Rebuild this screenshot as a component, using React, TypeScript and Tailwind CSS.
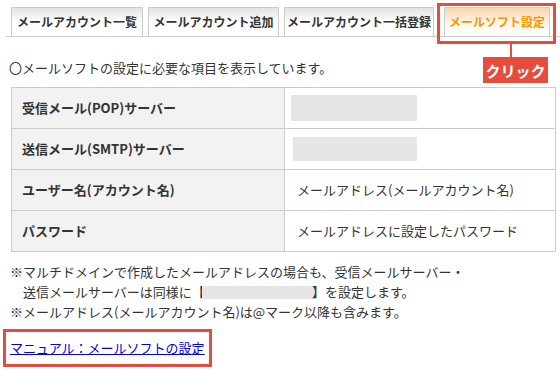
import React from "react";

const font = { fontFamily: '"Noto Sans CJK JP", "Noto Sans", sans-serif' };

function Tab({ label, w }: { label: string; w: string }) {
  return (
    <div
      className={`${w} h-[29px] flex items-center justify-center border border-b-0 border-[#cccccc] bg-gradient-to-b from-[#e2e2e2] via-white to-white text-[12px] font-bold text-[#333333] whitespace-nowrap`}
    >
      {label}
    </div>
  );
}

const rows: { h: string; v: React.ReactNode }[] = [
  { h: "受信メール(POP)サーバー", v: <div className="ml-[6px] w-[126px] h-[26px] bg-[#e6e6e6]" /> },
  { h: "送信メール(SMTP)サーバー", v: <div className="ml-[8px] w-[124px] h-[24px] bg-[#e6e6e6]" /> },
  { h: "ユーザー名(アカウント名)", v: <span className="pl-[12px]">メールアドレス(メールアカウント名)</span> },
  { h: "パスワード", v: <span className="pl-[12px]">メールアドレスに設定したパスワード</span> },
];

export default function App() {
  return (
    <div className="relative w-[560px] h-[370px] bg-white text-[#333333] overflow-hidden" style={font}>
      {/* Tabs */}
      <div className="ml-[6px] pt-[7px] pl-[5px] flex border-b border-[#cccccc]">
        <Tab label="メールアカウント一覧" w="w-[132px]" />
        <div className="w-[5px]" />
        <Tab label="メールアカウント追加" w="w-[131px]" />
        <div className="w-[5px]" />
        <Tab label="メールアカウント一括登録" w="w-[150px]" />
        <div className="w-[10px]" />
        <div className="w-[106px] h-[29px] flex items-center justify-center border border-b-0 border-[#cccccc] bg-gradient-to-b from-[#fcd6aa] via-[#fff3e6] to-white text-[12px] font-bold text-[#f39800] whitespace-nowrap">
          メールソフト設定
        </div>
      </div>

      {/* Red highlight box around active tab */}
      <div className="absolute left-[437px] top-[3px] w-[119px] h-[41px] border-[3px] border-[#e64b3b]" />
      {/* Callout line + label */}
      <div className="absolute left-[510px] top-[44px] w-[2px] h-[13px] bg-[#e64b3b]" />
      <div className="absolute left-[483px] top-[57px] w-[65px] h-[26px] bg-[#e64b3b] flex items-center justify-center text-white text-[15px] font-bold leading-none">
        クリック
      </div>

      {/* Intro */}
      <p className="mt-[21px] pl-[9px] text-[13px] leading-[20px]">〇メールソフトの設定に必要な項目を表示しています。</p>

      {/* Table */}
      <div className="mt-[9px] ml-[11px] w-[545px] border-l border-t border-[#cccccc] text-[13px]">
        {rows.map((r) => (
          <div key={r.h} className="grid grid-cols-[273px_271px]">
            <div className="h-[41px] flex items-center pl-[10px] bg-[#f2f2f2] border-r border-b border-[#cccccc] font-bold">
              {r.h}
            </div>
            <div className="h-[41px] flex items-center border-r border-b border-[#cccccc]">{r.v}</div>
          </div>
        ))}
      </div>

      {/* Notes */}
      <div className="mt-[10px] pl-[10px] text-[13px] leading-[20px] whitespace-nowrap">
        <div>※マルチドメインで作成したメールアドレスの場合も、受信メールサーバー・</div>
        <div className="flex items-center">
          <span>　送信メールサーバーは同様に【</span>
          <span className="inline-block w-[113px] h-[13px] bg-[#e6e6e6] -ml-[3px] -mr-[3px]" />
          <span>】を設定します。</span>
        </div>
        <div>※メールアドレス(メールアカウント名)は@マーク以降も含みます。</div>
      </div>

      {/* Manual link */}
      <div className="mt-[7px] ml-[3px] w-[209px] h-[38px] border-[3px] border-[#e64b3b] flex items-center pl-[4px]">
        <a href="#" className="text-[13px] text-[#0000ee] underline whitespace-nowrap">
          マニュアル：メールソフトの設定
        </a>
      </div>
    </div>
  );
}
